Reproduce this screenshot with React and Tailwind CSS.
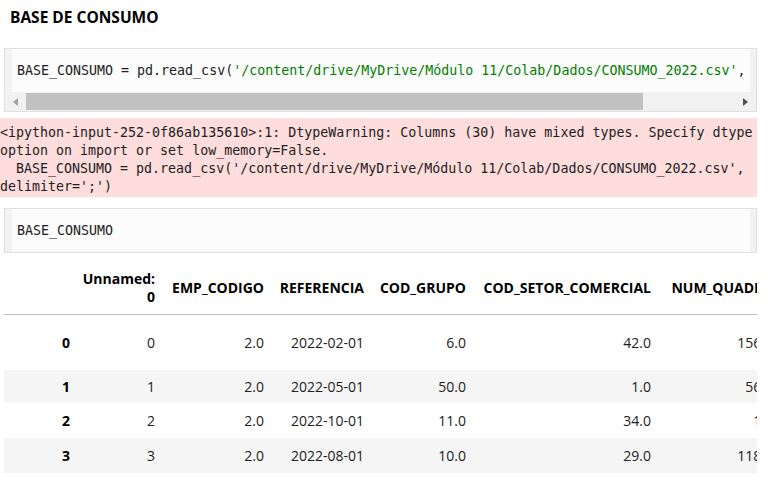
import React from "react";

const mono = { fontFamily: '"DejaVu Sans Mono", "Liberation Mono", monospace' };

const cols = "grid grid-cols-[74px_85px_109px_100px_102px_185px_122px]";

const rows = [
  { i: "0", u: "0", e: "2.0", r: "2022-02-01", g: "6.0", s: "42.0", q: "156.0", h: "h-[55px]", bg: "bg-white" },
  { i: "1", u: "1", e: "2.0", r: "2022-05-01", g: "50.0", s: "1.0", q: "56.0", h: "h-[33px]", bg: "bg-[#f5f5f5]" },
  { i: "2", u: "2", e: "2.0", r: "2022-10-01", g: "11.0", s: "34.0", q: "1.0", h: "h-[35px]", bg: "bg-white" },
  { i: "3", u: "3", e: "2.0", r: "2022-08-01", g: "10.0", s: "29.0", q: "118.0", h: "h-[35px]", bg: "bg-[#f5f5f5]" },
];

function CodeCell({ children, scroll }) {
  return (
    <div className="ml-[4px] w-[753px] border border-[#e0e0e0] bg-[#fafafa]">
      <div className="flex h-[43px]">
        <div className="w-[7px] bg-[#f2f2f2]" />
        <div
          className="flex-1 overflow-hidden whitespace-pre pl-[5px] flex items-center text-[13.3px] text-[#212121] bg-[#fcfcfc]"
          style={mono}
        >
          {children}
        </div>
        <div className="w-[6px] bg-[#f2f2f2]" />
      </div>
      {scroll && (
        <div className="h-[19px] bg-[#f1f1f1] flex items-center">
          <div className="w-[21px] flex items-center justify-center">
            <svg width="5" height="8" viewBox="0 0 5 8">
              <path d="M5 0 L0 4 L5 8 Z" fill="#a3a3a3" />
            </svg>
          </div>
          <div className="w-[617px] h-[17px] bg-[#c1c1c1]" />
          <div className="flex-1" />
          <div className="w-[21px] flex items-center justify-center">
            <svg width="5" height="8" viewBox="0 0 5 8">
              <path d="M0 0 L5 4 L0 8 Z" fill="#505050" />
            </svg>
          </div>
        </div>
      )}
    </div>
  );
}

export default function App() {
  return (
    <div
      className="w-[777px] h-[477px] overflow-hidden bg-white text-[#212121]"
      style={{ fontFamily: '"Open Sans", "Noto Sans", sans-serif' }}
    >
      <div className="pl-[10px] pt-[6px] h-[48px] text-[15.5px] leading-[22px] font-bold text-black">
        BASE DE CONSUMO
      </div>

      <CodeCell scroll>
        <span>BASE_CONSUMO = pd.read_csv(</span>
        <span className="text-[#008000]">'/content/drive/MyDrive/Módulo 11/Colab/Dados/CONSUMO_2022.csv'</span>
        <span>,</span>
      </CodeCell>

      <div
        className="mt-[6px] w-[757px] h-[79px] bg-[#ffdddd] pt-[6px] text-[13.3px] leading-[18px] whitespace-pre text-[#212121] overflow-hidden"
        style={mono}
      >
        <div>{"<ipython-input-252-0f86ab135610>:1: DtypeWarning: Columns (30) have mixed types. Specify dtype"}</div>
        <div>{"option on import or set low_memory=False."}</div>
        <div>{"  BASE_CONSUMO = pd.read_csv('/content/drive/MyDrive/Módulo 11/Colab/Dados/CONSUMO_2022.csv',"}</div>
        <div>{"delimiter=';')"}</div>
      </div>

      <div className="mt-[11px]">
        <CodeCell>
          <span>BASE_CONSUMO</span>
        </CodeCell>
      </div>

      <div className="ml-[4px] w-[753px] overflow-hidden text-[14px] leading-[18px]">
        <div className={`${cols} h-[61px] pt-[8px] mt-[1px] border-b border-[#bdbdbd] font-bold text-black items-center text-right`}>
          <div className="pr-[8px]" />
          <div className="pr-[8px]">
            <div>Unnamed:</div>
            <div>0</div>
          </div>
          <div className="pr-[8px]">EMP_CODIGO</div>
          <div className="pr-[8px]">REFERENCIA</div>
          <div className="pr-[8px]">COD_GRUPO</div>
          <div className="pr-[8px]">COD_SETOR_COMERCIAL</div>
          <div className="pr-[8px] whitespace-nowrap">NUM_QUADRA</div>
        </div>
        {rows.map((r) => (
          <div key={r.i} className={`${cols} ${r.h} ${r.bg} items-center text-right`}>
            <div className="pr-[8px] font-bold text-black">{r.i}</div>
            <div className="pr-[8px]">{r.u}</div>
            <div className="pr-[8px]">{r.e}</div>
            <div className="pr-[8px]">{r.r}</div>
            <div className="pr-[8px]">{r.g}</div>
            <div className="pr-[8px]">{r.s}</div>
            <div className="pr-[8px]">{r.q}</div>
          </div>
        ))}
      </div>
    </div>
  );
}
